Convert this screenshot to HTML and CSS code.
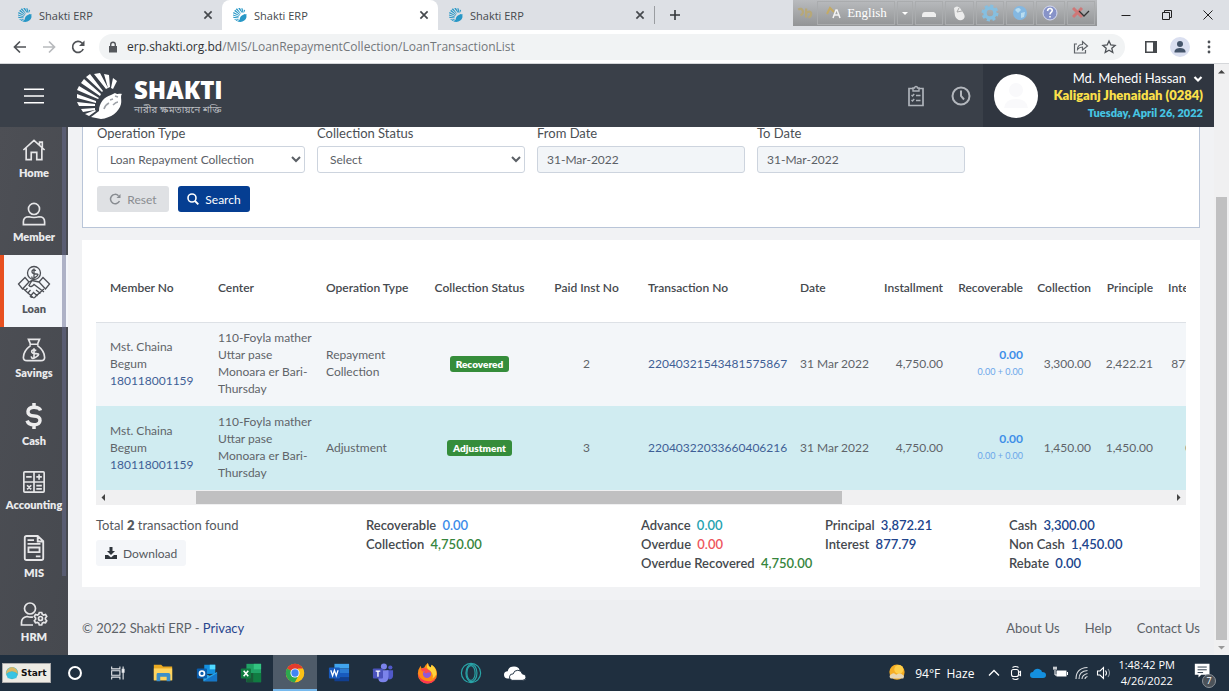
FILE: index.html
```html
<!DOCTYPE html>
<html lang="en">
<head>
<meta charset="utf-8">
<meta name="viewport" content="width=device-width, initial-scale=1">
<title>Shakti ERP</title>
<link rel="stylesheet" href="styles.css">
</head>
<body>
<svg class="defs" aria-hidden="true">
  <symbol id="logo" viewBox="0 0 46 46">
    <path d="M36 5l4 3-4 8-2-1zM27 1l5 1 1 12-2 1zM17 1l6-1 8 15-2 1zM9 4l4-3 13 17-1 1zM4 10l3-4 17 15-1 2zM0 17l2-4 20 12-1 1zM0 25v-4l19 7v2zM2 33l-2-4 18 2v2zM6 39l-2-3 14-1v2zM12 43l-4-2 10-4 1 1z"/>
    <path d="M14 44l8-6c0-8 5-14 12-16l4-2c3 2 4 0 7 1-2 2 0 6-1 10-2 8-10 14-20 15z"/>
  </symbol>
  <symbol id="close" viewBox="0 0 10 10"><path d="M2 2l6 6M8 2L2 8" fill="none" stroke="currentColor" stroke-width="1.400"/></symbol>
</svg>
<div class="window">
  <div class="tabstrip">
    <div class="tab"><svg class="favicon"><use href="#logo"/></svg><span>Shakti ERP</span><button aria-label="Close tab"><svg><use href="#close"/></svg></button></div>
    <div class="tab active"><svg class="favicon"><use href="#logo"/></svg><span>Shakti ERP</span><button aria-label="Close tab"><svg><use href="#close"/></svg></button></div>
    <div class="tab"><svg class="favicon"><use href="#logo"/></svg><span>Shakti ERP</span><button aria-label="Close tab"><svg><use href="#close"/></svg></button></div>
    <button class="newtab" aria-label="New tab"><svg viewBox="0 0 12 12"><path d="M6 1v10M1 6h10" stroke="#33363a" stroke-width="1.600"/></svg></button>
    <div class="langbar">
      <span class="lang-mark"><svg viewBox="0 0 16 16" fill="none" stroke="#b7a878" stroke-width="2"><path d="M2 5c4-3 6 4 2 5M9 4v8M9 8c5-4 6 3 2 4"/></svg></span>
      <button class="lang-name"><svg viewBox="0 0 18 16"><path d="M2 9l3-6 4 4" fill="none" stroke="#c4aa64" stroke-width="2"/><path d="M8 13l3-8h1l3 8M9 10h5" fill="none" stroke="#f4f4f4" stroke-width="1.500"/></svg>English</button>
      <button class="lang-drop" aria-label="Languages"><svg viewBox="0 0 8 8"><path d="M1 3h6L4 6z" fill="#fff"/></svg></button>
      <button aria-label="Keyboard"><svg viewBox="0 0 18 18"><path d="M2 12q0-4 3-4h9l2 2v3H2z" fill="#eee"/></svg></button>
      <button aria-label="Mouse"><svg viewBox="0 0 18 18"><path d="M4 4q3-3 6 0l4 6q2 4-2 6-5 1-7-4z" fill="#ececec"/><path d="M9 4l-2 4 5-1" fill="none" stroke="#aaa"/></svg></button>
      <button aria-label="Settings"><svg viewBox="0 0 18 18"><circle cx="9" cy="9" r="5" fill="none" stroke="#86bfe0" stroke-width="3.500"/><circle cx="9" cy="9" r="7" fill="none" stroke="#86bfe0" stroke-width="3" stroke-dasharray="3 2.500"/></svg></button>
      <button aria-label="Web"><svg viewBox="0 0 18 18"><circle cx="9" cy="9" r="7" fill="#84b8e2"/><path d="M4 6q4-4 6 0l-3 3zM10 9l4-1-1 5-3 1z" fill="#b8dcf0"/></svg></button>
      <button aria-label="Help"><svg viewBox="0 0 18 18"><circle cx="9" cy="9" r="7" fill="#8793c8" stroke="#d5daf0"/><path d="M6.500 7q.5-3 3-2.500 3 1 1 3.500-1.500 1-1.500 2.500M9 12v1.500" fill="none" stroke="#fff" stroke-width="1.600"/></svg></button>
      <button aria-label="Exit"><svg viewBox="0 0 18 18"><path d="M1 4l9 9M10 4l-9 9" stroke="#cf7777" stroke-width="3"/><path d="M7 7l5 5 5-5" fill="none" stroke="#333" stroke-width="1.300"/></svg></button>
    </div>
    <div class="caption">
      <button aria-label="Minimize"><svg viewBox="0 0 12 12"><path d="M1.500 6.500h9" stroke="#222"/></svg></button>
      <button aria-label="Restore"><svg viewBox="0 0 12 12"><path d="M1.500 3.500h7v7h-7zM3.500 3.500v-2h7v7h-2" fill="none" stroke="#222"/></svg></button>
      <button aria-label="Close"><svg viewBox="0 0 12 12"><path d="M1.500 1.500l9 9M10.500 1.500l-9 9" stroke="#222"/></svg></button>
    </div>
  </div>
  <div class="toolbar">
    <button aria-label="Back"><svg viewBox="0 0 16 16"><path d="M14 8H3M8 2.500L2.500 8 8 13.500" fill="none" stroke="#505357" stroke-width="1.700"/></svg></button>
    <button aria-label="Forward"><svg viewBox="0 0 16 16"><path d="M2 8h11M8 2.500L13.500 8 8 13.500" fill="none" stroke="#b8babd" stroke-width="1.700"/></svg></button>
    <button aria-label="Reload"><svg viewBox="0 0 16 16"><path d="M13.200 10A5.500 5.500 0 1 1 12 4l1.500 1.500" fill="none" stroke="#505357" stroke-width="1.700"/><path d="M14.500 1.500v5.500H9z" fill="#505357"/></svg></button>
    <div class="address">
      <svg viewBox="0 0 12 12"><path d="M2 5h8v6.500H2z" fill="#55585c"/><path d="M3.700 5V3.500a2.300 2.300 0 0 1 4.600 0V5" fill="none" stroke="#55585c" stroke-width="1.400"/></svg>
      <span class="url"><span>erp.shakti.org.bd</span>/MIS/LoanRepaymentCollection/LoanTransactionList</span>
      <button aria-label="Share"><svg viewBox="0 0 16 16" fill="none" stroke="#5f6368" stroke-width="1.200"><path d="M4 5H1.500v9h11V11M4.500 10.500q0-5 5-5V2.500l5 4.500-5 4V8q-3 0-5 2.500z"/></svg></button>
      <button aria-label="Bookmark"><svg viewBox="0 0 16 16" fill="none" stroke="#4d5156" stroke-width="1.300"><path d="M8 2l1.800 4 4.300.4-3.300 2.900 1 4.200L8 11.300l-3.800 2.200 1-4.200L1.900 6.400 6.200 6z"/></svg></button>
    </div>
    <button aria-label="Side panel"><svg viewBox="0 0 16 16"><path d="M2.800 2.800h10.400v10.400H2.800z" fill="none" stroke="#45484c" stroke-width="1.600"/><path d="M10 2h4v12h-4z" fill="#45484c"/></svg></button>
    <button class="profile" aria-label="Profile"><svg viewBox="0 0 16 16" fill="#44546a"><circle cx="8" cy="5" r="3"/><path d="M2.500 13.500V12q1-3 5.500-3t5.500 3v1.500z"/></svg></button>
    <button aria-label="Menu"><svg viewBox="0 0 16 16" fill="#4d5156"><circle cx="8" cy="3" r="1.400"/><circle cx="8" cy="8" r="1.400"/><circle cx="8" cy="13" r="1.400"/></svg></button>
  </div>

  <div class="viewport">
    <div class="app">
      <header class="header">
        <button class="burger" aria-label="Toggle menu"><svg viewBox="0 0 20 16"><path d="M0 1.200h20M0 8h20M0 14.800h20" stroke="#fff" stroke-width="1.500"/></svg></button>
        <a class="brand" href="#">
          <svg class="brand-mark" viewBox="0 0 46 46"><use href="#logo"/><path d="M27 36q1-4 5-6M33 27l3-1M36 32q3-3 5-3M38 23l3 1" fill="none" stroke="#9ea2a8" stroke-width="1.500"/></svg>
          <span class="brand-text"><strong>SHAKTI</strong><small>নারীর ক্ষমতায়নে শক্তি</small></span>
        </a>
        <nav class="header-tools">
          <button aria-label="Tasks"><svg viewBox="0 0 20 22" fill="none" stroke="#aeb3ba" stroke-width="1.700"><path d="M7 3.500H3v17h14v-17h-4"/><path d="M7 6V3h1.500a1.500 1.500 0 0 1 3 0H13v3zM5.500 10l1 1 1.700-2M5.500 15l1 1 1.700-2M10 10.500h4.500M10 15.500h4.500" stroke-width="1.400"/></svg></button>
          <button aria-label="History"><svg viewBox="0 0 20 20" fill="none" stroke="#b3b7bd" stroke-width="2"><circle cx="10" cy="10" r="8.500"/><path d="M10 4.500V10l3 3.500"/></svg></button>
        </nav>
        <div class="user">
          <svg class="avatar" viewBox="0 0 44 44"><circle cx="22" cy="22" r="22" fill="#fff"/><g fill="#f9f9fb"><circle cx="22" cy="16" r="7"/><path d="M10 34q1-9 12-9t12 9z"/></g></svg>
          <div class="user-text">
            <button class="user-name">Md. Mehedi Hassan <svg viewBox="0 0 10 10"><path d="M1.500 3L5 6.500 8.500 3" fill="none" stroke="#fff" stroke-width="2.200"/></svg></button>
            <span class="branch">Kaliganj Jhenaidah (0284)</span>
            <span class="today">Tuesday, April 26, 2022</span>
          </div>
        </div>
      </header>
      <div class="body">
        <nav class="sidebar">
          <a href="#"><svg viewBox="0 0 26 26" fill="none" stroke="#e6e6e8" stroke-width="1.800"><path d="M1.500 13L13 2.500 24.500 13M19 7.500V4.500h3v6M4.500 11v12.500h5.500v-8h6v8h5.500V11"/></svg>Home</a>
          <a href="#"><svg viewBox="0 0 26 26" fill="none" stroke="#e6e6e8" stroke-width="1.800"><circle cx="13" cy="7.500" r="6"/><path d="M1.500 24.500v-3q0-5.500 6-5.500 5.500 1.500 11 0 6 0 6 5.500v3z"/></svg>Member</a>
          <a href="#" class="current" aria-current="page"><svg class="tallest" viewBox="0 0 34 34" fill="none" stroke="#4c4f55" stroke-width="1.300"><circle cx="17" cy="8" r="6.500"/><path d="M19 5.500q-4-1.500-4 1t4 2.500-.2 3-4-.5M17 3.500v9M1.500 19L8 12.500l4 4.500-6.500 7zM32.500 19L26 12.500 22 17l6.500 7zM12 17l3-1.500 7 1.500M12 17l-6 6.500 10 9q1.500 1 2.500-1l8.500-7.500M15 15.500l-3 5q2 2.500 5-1l10 7.500M16 32q-2 1-3-1M10.500 23l-2.500 3M13.500 25l-3 3.500M16.500 27.500L13.500 31M19 25l4.500 3.500M16 27l4.500 4"/></svg>Loan</a>
          <a href="#"><svg viewBox="0 0 26 26" fill="none" stroke="#e6e6e8" stroke-width="1.800"><path d="M9 6L7 1.500h12L17 6M8 6.800h10M9.500 8Q1.500 14 1.500 21q0 3.500 4 3.500h15q4 0 4-3.500 0-7-8-13M15.500 13.500q-5-1.500-5 1t5 2.500 0 3.500-5.500-.5M13 11v11.500"/></svg>Savings</a>
          <a href="#"><svg class="tall" viewBox="0 0 26 30" fill="none" stroke="#ededee" stroke-width="3.800"><path d="M20 9Q19 5.500 13 5.500T6.500 10t6.500 5 6.500 5-6.500 4.500T5.500 20M13 1v5M13 24v5"/></svg>Cash</a>
          <a href="#"><svg viewBox="0 0 26 26" fill="none" stroke="#e6e6e8" stroke-width="1.800"><rect x="2" y="2" width="22" height="22" rx="1"/><path d="M13 2v22M2 13h22M4.500 7.500h6M15.500 7.500h6M18.500 4.500v6M5.500 16.500l4.500 4.500M10 16.500L5.500 21M15.500 17h6M15.500 20.500h6"/></svg>Accounting</a>
          <a href="#"><svg class="tall" viewBox="0 0 26 30" fill="none" stroke="#e6e6e8" stroke-width="2"><path d="M5 2h12l6 5.500V26q0 2-2 2H5q-2 0-2-2V4q0-2 2-2zM17 2v6h6M6 6.500h7M6 10.500h14M7 14.500h12v5H7zM15 24h5"/></svg>MIS</a>
          <a href="#"><svg class="wide" viewBox="0 0 28 26" fill="none" stroke="#e6e6e8" stroke-width="1.700"><circle cx="10" cy="7.500" r="5.500"/><path d="M13 24H1.500v-2.500q0-5 5.500-6 3 1 6 .5"/><circle cx="20.500" cy="17.500" r="2"/><path d="M19.300 11.500h2.400l.6 1.800 1.300.7 1.900-.5 1.200 2-1.300 1.500v1.300l1.300 1.500-1.200 2-1.900-.4-1.300.7-.6 1.900h-2.400l-.6-1.900-1.300-.7-1.900.4-1.200-2 1.300-1.500V17l-1.300-1.500 1.200-2 1.900.5 1.300-.7z"/></svg>HRM</a>
          <span class="sidebar-thumb"></span>
        </nav>
        <div class="page">
          <main class="content">
            <form class="card filters">
              <div class="fields">
                <div class="field"><label for="op">Operation Type</label><select id="op"><option>Loan Repayment Collection</option></select></div>
                <div class="field"><label for="status">Collection Status</label><select id="status"><option>Select</option></select></div>
                <div class="field"><label for="from">From Date</label><input id="from" type="text" value="31-Mar-2022" readonly></div>
                <div class="field"><label for="to">To Date</label><input id="to" type="text" value="31-Mar-2022" readonly></div>
              </div>
              <div class="actions">
                <button type="reset" class="btn reset"><svg viewBox="0 0 12 12"><path d="M10.500 8A4.700 4.700 0 1 1 9.500 2.700" fill="none" stroke="#888c91" stroke-width="1.500"/><path d="M11.500 1v4h-4z" fill="#888c91"/></svg>Reset</button>
                <button type="button" class="btn search"><svg viewBox="0 0 12 12"><path d="M8 8l3.300 3.300" stroke="#fff" stroke-width="1.900"/><circle cx="5" cy="5" r="4" fill="none" stroke="#fff" stroke-width="1.600"/></svg>Search</button>
              </div>
            </form>
            <section class="card results">
              <div class="table-wrap">
                <table>
                  <colgroup><col class="c-member"><col class="c-name"><col class="c-name"><col class="c-status"><col class="c-inst"><col class="c-trx"><col class="c-date"><col class="c-installment"><col class="c-recoverable"><col class="c-collection"><col class="c-principle"><col class="c-interest"></colgroup>
                  <thead><tr><th>Member No</th><th>Center</th><th>Operation Type</th><th class="mid">Collection Status</th><th class="mid">Paid Inst No</th><th>Transaction No</th><th>Date</th><th class="num">Installment</th><th class="num">Recoverable</th><th class="num">Collection</th><th class="num">Principle</th><th class="num">Interest</th></tr></thead>
                  <tbody>
                    <tr><td>Mst. Chaina Begum <a href="#">180118001159</a></td><td>110-Foyla mather Uttar pase Monoara er Bari-Thursday</td><td>Repayment Collection</td><td class="mid"><span class="badge">Recovered</span></td><td class="mid">2</td><td><a href="#">22040321543481575867</a></td><td class="date">31 Mar 2022</td><td class="num">4,750.00</td><td class="num due"><b>0.00</b><small>0.00 + 0.00</small></td><td class="num">3,300.00</td><td class="num">2,422.21</td><td class="num">877.79</td></tr>
                    <tr class="adjust"><td>Mst. Chaina Begum <a href="#">180118001159</a></td><td>110-Foyla mather Uttar pase Monoara er Bari-Thursday</td><td>Adjustment</td><td class="mid"><span class="badge">Adjustment</span></td><td class="mid">3</td><td><a href="#">22040322033660406216</a></td><td class="date">31 Mar 2022</td><td class="num">4,750.00</td><td class="num due"><b>0.00</b><small>0.00 + 0.00</small></td><td class="num">1,450.00</td><td class="num">1,450.00</td><td class="num">0.00</td></tr>
                  </tbody>
                </table>
              </div>
              <div class="hscroll"><svg viewBox="0 0 15 15"><path d="M9 4v7L5.500 7.500z" fill="#444"/></svg><span class="htrack"><span class="hthumb"></span></span><svg viewBox="0 0 15 15"><path d="M6 4v7l3.500-3.500z" fill="#444"/></svg></div>
              <div class="summary">
                <div><p class="found">Total <b>2</b> transaction found</p><button class="btn download"><svg viewBox="0 0 12 12" fill="#2f353c"><path d="M4.500 0h3v4H10L6 8 2 4h2.500zM0 8h3l3 2.500L9 8h3v4H0z"/></svg>Download</button></div>
                <div><p>Recoverable <b class="blue">0.00</b></p><p>Collection <b class="green">4,750.00</b></p></div>
                <div><p>Advance <b class="teal">0.00</b></p><p>Overdue <b class="red">0.00</b></p><p>Overdue Recovered <b class="green">4,750.00</b></p></div>
                <div><p>Principal <b class="navy">3,872.21</b></p><p>Interest <b class="navy">877.79</b></p></div>
                <div><p>Cash <b class="navy">3,300.00</b></p><p>Non Cash <b class="navy">1,450.00</b></p><p>Rebate <b class="navy">0.00</b></p></div>
              </div>
            </section>
          </main>
          <footer class="footer"><span>© 2022 Shakti ERP - <a class="privacy" href="#">Privacy</a></span><nav><a href="#">About Us</a><a href="#">Help</a><a href="#">Contact Us</a></nav></footer>
        </div>
      </div>
    </div>
    <div class="vscroll"><svg viewBox="0 0 15 15"><path d="M4 9.500h7L7.500 6z" fill="#444"/></svg><span class="vtrack"><span class="vthumb"></span></span><svg viewBox="0 0 15 15"><path d="M4 6h7L7.500 9.500z" fill="#999"/></svg></div>
  </div>

  <div class="taskbar">
    <button class="start"><svg viewBox="0 0 16 16"><circle cx="8" cy="8" r="7" fill="#45b9c9"/><path d="M1 9q1-7 7-8 6 1 7 8-7-6-14 0z" fill="#d9b765"/><path d="M3 9q5-5 10 0v5H3z" fill="#37c4e4"/></svg>Start</button>
    <div class="apps">
      <button aria-label="Cortana"><svg viewBox="0 0 24 24"><circle cx="12" cy="12" r="6.500" fill="none" stroke="#fff" stroke-width="2.200"/></svg></button>
      <button aria-label="Task view"><svg viewBox="0 0 24 24" fill="none" stroke="#e5e8eb" stroke-width="1.200"><path d="M4 5v2.500h9V5M4 19v-2.500h9V19M4 9.500h9v5H4zM16.500 5v14"/><path d="M15.500 8h2v3h-2z" fill="#fff"/></svg></button>
      <button aria-label="File Explorer"><svg viewBox="0 0 24 24"><path d="M2 3h8l2 2h10v15H2z" fill="#e9a922"/><path d="M2 7h20v13H2z" fill="#ffd45e"/><path d="M6 12h12q2 0 2 2v7h-4v-5H9v5H5v-7q0-2 1-2z" fill="#3d8fc8"/></svg></button>
      <button aria-label="Outlook"><svg viewBox="0 0 24 24"><path d="M9 3h12v10H9z" fill="#1490df"/><path d="M15 3h6v5h-6z" fill="#50d9ff"/><path d="M8 12l7 3 8-4v10H8z" fill="#28a8ea"/><path d="M8 21l15-9v9z" fill="#1676c8"/><rect x="1" y="7" width="11" height="11" rx="1" fill="#0a5dac"/><circle cx="6.500" cy="12.500" r="2.700" fill="none" stroke="#fff" stroke-width="1.800"/></svg></button>
      <button aria-label="Excel"><svg viewBox="0 0 24 24"><path d="M7 2h16v20H7z" fill="#21a366"/><path d="M15 2h8v6h-8z" fill="#33c481"/><path d="M7 12h8v10H7z" fill="#185c37"/><path d="M15 12h8v10h-8z" fill="#107c41"/><rect x="1" y="7" width="11" height="11" rx="1" fill="#107c41"/><path d="M4 9.500l5 6M9 9.500l-5 6" stroke="#fff" stroke-width="1.700"/></svg></button>
      <button class="running" aria-label="Chrome"><svg viewBox="0 0 24 24"><circle cx="12" cy="12" r="10" fill="#fbc116"/><path d="M12 12L3.340 7A10 10 0 0 1 20.660 7z" fill="#e33b2e"/><path d="M3.340 7A10 10 0 0 0 12 22l4.500-8L12 12z" fill="#2da94f"/><path d="M20.660 7A10 10 0 0 1 12 22l4.500-8L15 7z" fill="#fbc116"/><circle cx="12" cy="12" r="5" fill="#fff"/><circle cx="12" cy="12" r="4" fill="#4285f4"/></svg></button>
      <button aria-label="Word"><svg viewBox="0 0 24 24"><path d="M7 2h16v5H7z" fill="#41a5ee"/><path d="M7 7h16v5H7z" fill="#2b7cd3"/><path d="M7 12h16v5H7z" fill="#185abd"/><path d="M7 17h16v4H7z" fill="#103f91"/><rect x="1" y="6" width="12" height="12" rx="1" fill="#185abd"/><path d="M3 9l2 6 2-6 2 6 2-6" fill="none" stroke="#fff" stroke-width="1.400"/></svg></button>
      <button aria-label="Teams"><svg viewBox="0 0 24 24"><circle cx="13" cy="5" r="3.300" fill="#7b83eb"/><circle cx="20" cy="6" r="2.300" fill="#5059c9"/><path d="M16 9h7v6q0 4-5 4z" fill="#5059c9"/><path d="M7 9h11v7q0 6-6 6t-5-6z" fill="#7b83eb"/><rect x="1" y="7" width="11" height="11" rx="1" fill="#4b53bc"/><path d="M4 10h5M6.500 10v6" stroke="#fff" stroke-width="1.500"/></svg></button>
      <button aria-label="Firefox"><svg viewBox="0 0 24 24"><path d="M13 1q0 3 3 5 2-1 1-3 6 4 6 10a10.500 10.500 0 0 1-21 0Q2 8 5 4l1 3 3-1q1-3 4-5z" fill="#ff8a16"/><path d="M13 1q0 3 3 5l1-3q6 4 5 11-2 3-4 4 2-6-5-10-2-3 0-7z" fill="#ffd43b"/><path d="M2 12q3 10 14 9 4-1 6-5-2 7-9.500 7.500Q3 23 2 12z" fill="#ff3750"/><circle cx="12" cy="13" r="4.500" fill="#9059d8"/><path d="M6 9q4-2 7 1-2 0-3 2" fill="none" stroke="#ff4b4b" stroke-width="3"/></svg></button>
      <button aria-label="Opera"><svg viewBox="0 0 24 24" fill="none" stroke="#29a5a8" stroke-width="1.300"><circle cx="12" cy="12" r="10.500"/><ellipse cx="12.500" cy="12" rx="6" ry="9.500"/><ellipse cx="12" cy="12" rx="4.500" ry="8"/></svg></button>
      <button aria-label="OneDrive"><svg viewBox="0 0 24 24" fill="#fff"><path d="M4 18a4 4 0 0 1 0-8q1-5 7-5 5 0 6 4-6 0-7 4-4 0-4 5z"/><path d="M9 20a3.500 3.500 0 0 1 1-7q1-4 5-4 4 0 5 4 4 0 4 3.500T20 20z" stroke="#1f2f3f"/></svg></button>
    </div>
    <div class="tray">
      <button class="weather"><svg viewBox="0 0 20 20"><circle cx="10" cy="9" r="8.500" fill="#f5ad24"/><circle cx="12" cy="6" r="5" fill="#ffcf49"/><path d="M3 16q-3-3 1-5 3-2 5 1 5-3 7 0 3 1 1 4z" fill="#e7d6b4"/></svg>94°F&nbsp; Haze</button>
      <button aria-label="Hidden icons"><svg viewBox="0 0 16 16"><path d="M3 10.500l5-5 5 5" fill="none" stroke="#fff" stroke-width="1.300"/></svg></button>
      <button aria-label="Meet now"><svg viewBox="0 0 16 16" fill="none" stroke="#fff" stroke-width="1.100"><rect x="3.500" y="4.500" width="7" height="7" rx="2"/><path d="M10.500 7.500l2-1v4l-2-1M4.500 2.500q3-2 6 0M4.500 13.500q3 2 6 0"/></svg></button>
      <button aria-label="OneDrive sync"><svg viewBox="0 0 16 16" fill="#1490df"><path d="M3 13a3 3 0 0 1 0-6q2-4 6-3 3 1 3 3 4 0 4 3t-3 3z"/></svg></button>
      <button aria-label="Battery"><svg viewBox="0 0 16 16"><path d="M4.500 5.500h10v6h-10z" fill="#fff"/><path d="M1 3h4M2 1.500V5M4 1.500V5M3 5v5h3M15.500 7v3" fill="none" stroke="#fff"/></svg></button>
      <button aria-label="Network"><svg viewBox="0 0 16 16" fill="none" stroke="#d9dde1" stroke-width="1.100"><path d="M2 14Q2 3 13.500 2.500M5 14q0-8 8.500-8.500M8 14q0-4 5.500-5.500M11 14q0-2 2.500-2.500"/></svg></button>
      <button aria-label="Volume"><svg viewBox="0 0 16 16" fill="none" stroke="#fff" stroke-width="1.100"><path d="M1.500 6h2.500l3.500-3.500v11L4 10H1.500zM9.500 5.500q2 2.500 0 5"/><path d="M12 4q3 4 0 8" stroke="#8b96a0"/></svg></button>
      <button class="clock"><span>1:48:42 PM</span><span>4/26/2022</span></button>
      <button class="notice" aria-label="Notifications"><svg viewBox="0 0 24 24"><path d="M2 2h16v12h-9l-3 3v-3H2z" fill="#fff"/><path d="M5 5.500h10M5 8.500h10M5 11.500h6" stroke="#1f2f3f"/></svg><span class="count">7</span></button>
    </div>
  </div>
</div>
</body>
</html>
```
FILE: styles.css
```css
* { box-sizing: border-box; }
body { margin: 0; font-family: Lato, "Open Sans", sans-serif; font-size: 12px; color: #55595e; }
button { border: 0; background: none; padding: 0; margin: 0; font: inherit; color: inherit; }
a { text-decoration: none; color: inherit; }
p { margin: 0; }
svg { display: block; flex: none; }
.defs { position: absolute; width: 0; height: 0; }
.window { display: flex; flex-direction: column; height: 100vh; overflow: hidden; }

.tabstrip { display: flex; align-items: stretch; height: 30px; background: #dde0e5; font: 11px "Noto Sans", sans-serif; color: #45494d; flex: none; }
.tab { display: flex; align-items: center; flex: 0 1 216px; gap: 6px; padding: 0 8px 0 10px; }
.tab:first-child { flex-basis: 222px; padding-left: 17px; }
.tab.active { background: #fff; border-radius: 8px 8px 0 0; }
.tab span { flex: 1; font: 11px "Open Sans", sans-serif; }
.favicon { width: 16px; height: 14px; fill: #2797c6; }
.tab button svg { width: 12px; height: 12px; }
.newtab { display: flex; align-items: center; align-self: center; padding-left: 14px; height: 18px; border-left: 1px solid #9a9da1; }
.newtab svg { width: 12px; height: 12px; }
.langbar { display: flex; align-items: center; gap: 2px; height: 26px; width: 304px; margin-left: auto; padding: 0 2px; background: linear-gradient(#b9bbbe, #929496); }
.langbar button, .lang-mark { display: flex; align-items: center; justify-content: center; flex: 1; height: 24px; border: 1px solid #aaacae; }
.langbar .lang-mark { flex: 0 0 20px; border: 0; }
.langbar svg { width: 18px; height: 18px; }
.langbar .lang-name { flex: 0 0 78px; gap: 4px; color: #fff; font: 13px "Liberation Serif", serif; }
.langbar .lang-drop { flex: 0 0 16px; }
.langbar .lang-drop svg { width: 8px; height: 8px; }
.caption { display: flex; align-items: center; width: 132px; padding-left: 8px; }
.caption button { flex: 1; display: flex; justify-content: center; }
.caption svg { width: 12px; height: 12px; }

.toolbar { display: flex; align-items: center; gap: 13px; height: 34px; padding: 0 12px; background: #fff; border-bottom: 1px solid #d5d7da; flex: none; }
.toolbar svg { width: 16px; height: 16px; }
.toolbar > button:last-child { width: 16px; }
.address { display: flex; align-items: center; flex: 1; gap: 12px; height: 26px; padding: 0 8px; margin-right: 5px; border-radius: 13px; background: #f1f3f4; }
.profile { margin: 0 -2px 0 -2px; }
.address > svg { width: 12px; height: 12px; }
.url { flex: 1; margin-left: -4px; font: 12px "Open Sans", sans-serif; color: #73777b; }
.url span { color: #2f3236; }
.profile { padding: 2px; border-radius: 50%; background: #dadff0; }

.viewport { display: flex; flex: 1; min-height: 0; }
.app { display: flex; flex-direction: column; flex: 1; min-width: 0; }
.header { display: flex; align-items: center; height: 63px; background: #3a4049; flex: none; }
.burger { padding: 0 24px; }
.burger svg { width: 20px; height: 16px; }
.brand { display: flex; align-items: center; gap: 11px; margin-left: 9px; color: #fff; }
.brand-mark { width: 46px; height: 46px; fill: #fff; }
.brand-text { display: flex; flex-direction: column; padding-top: 4px; }
.brand-text strong { font: 800 24px/26px "Open Sans", sans-serif; }
.brand-text small { font: 10px/16px "Noto Sans Bengali", "Noto Sans", sans-serif; color: #b9bcc0; }
.header-tools { display: flex; gap: 25px; margin-left: auto; padding-right: 12px; }
.header-tools svg { width: 20px; height: 22px; }
.user { display: flex; align-items: center; justify-content: space-between; width: 231px; height: 100%; padding: 0 11px; background: #303640; }
.avatar { width: 44px; height: 44px; }
.user-text { display: flex; flex-direction: column; align-items: flex-end; line-height: 17px; }
.user-name { display: flex; align-items: center; gap: 7px; font-size: 13px; color: #fff; }
.user-name svg { width: 10px; height: 10px; }
.branch { font-size: 13px; font-weight: 800; color: #fbe04a; }
.today { font-size: 11px; font-weight: 800; color: #46c5e3; }

.body { display: flex; flex: 1; min-height: 0; }
.sidebar { position: relative; width: 68px; background: linear-gradient(100deg, #4d4f55, #46494f); flex: none; overflow: hidden; }
.sidebar a { display: flex; flex-direction: column; align-items: center; gap: 2px; padding: 10px 0; line-height: 16px; font-size: 11px; font-weight: 800; color: #e9eaec; }
.sidebar svg { width: 24px; height: 26px; }
.sidebar .tall { height: 30px; }
.sidebar .tallest { width: 34px; height: 34px; }
.sidebar .wide { width: 28px; }
.sidebar .current { background: #f3f6fa; box-shadow: inset 4px 0 #e8501f; color: #54585e; }
.sidebar-thumb { position: absolute; top: 0; right: 2px; width: 4px; height: 85%; background: rgba(105, 110, 145, .5); }

.page { display: flex; flex-direction: column; justify-content: space-between; flex: 1; min-width: 0; background: #f1f2f4; }
.content { display: flex; flex-direction: column; gap: 12px; padding: 0 14px; }
.card { background: #fff; }
.filters { padding: 0 14px 15px; border: 1px solid #b9c5d8; border-top: 0; }
.fields { display: grid; grid-template-columns: repeat(5, 1fr); gap: 12px; }
.field { display: flex; flex-direction: column; gap: 6px; }
.field label { font-size: 13px; line-height: 13px; color: #4b4f54; }
.field select, .field input { width: 100%; height: 27px; border: 1px solid #cdd4de; border-radius: 3px; background: #fff; font: 12px Lato, sans-serif; color: #5b6066; }
.field select { padding: 0 8px; }
.field input { padding: 0 9px; background: #f2f5f8; }
.actions { display: flex; gap: 9px; margin-top: 13px; }
.btn { display: flex; align-items: center; justify-content: center; gap: 6px; height: 26px; padding: 0 9px; border-radius: 3px; }
.btn svg { width: 12px; height: 12px; }
.reset { width: 72px; background: #dfe1e4; color: #8a8d91; }
.search { width: 72px; background: #053e92; color: #fff; }

.results { padding: 14px; }
.table-wrap { overflow: hidden; }
table { width: 1120px; table-layout: fixed; border-collapse: collapse; }
.c-member { width: 115px; }
.c-name { width: 108px; }
.c-status { width: 105px; }
.c-inst { width: 109px; }
.c-trx { width: 152px; }
.c-date { width: 82px; }
.c-installment { width: 75px; }
.c-recoverable { width: 80px; }
.c-collection { width: 68px; }
.c-principle { width: 62px; }
.c-interest { width: 56px; }
th, td { padding: 0 7px; text-align: left; }
th { height: 68px; white-space: nowrap; font-weight: 600; color: #45494e; border-bottom: 1px solid #dde1e6; }
td { height: 84px; padding-bottom: 2px; line-height: 17px; background: #f3f6f9; color: #5f6469; }
.adjust td { background: #d0ecf1; }
th:first-child, td:first-child { padding-left: 14px; }
td a { color: #3f5f96; }
td:first-child a { display: block; }
.mid { text-align: center; }
.num { text-align: right; }
.date { white-space: nowrap; }
td:nth-child(2), td.date { padding-right: 0; }
.badge { display: inline-block; padding: 0 6px; border-radius: 3px; background: #358d3b; color: #fff; font-size: 10px; line-height: 16px; font-weight: 800; }
.due b { display: block; color: #3f8fe8; }
.due small { display: block; font-size: 9px; color: #6ba6ea; }
.hscroll, .vscroll { display: flex; background: #f0f0f1; }
.hscroll { height: 15px; }
.hscroll svg, .vscroll svg { width: 15px; height: 15px; }
.htrack { display: flex; flex: 1; padding: 1px 0; }
.hthumb { width: 61%; margin-left: 8%; background: #c0c0c1; }
.summary { display: grid; grid-template-columns: 270fr 275fr 184fr 184fr 177fr; padding-top: 11px; font-size: 13px; line-height: 19px; font-weight: 600; color: #45494e; white-space: nowrap; }
.summary b { font-weight: 600; margin-left: 3px; }
.found { font-weight: 400; color: #55595e; }
.summary .found b { font-weight: 800; margin: 0; }
.download { margin-top: 5px; background: #f4f6f9; font-size: 12px; font-weight: 400; color: #55595e; }
.blue { color: #3b8bea; } .green { color: #36853d; } .teal { color: #25a2b0; } .red { color: #ee555d; } .navy { color: #20448c; }
.footer { display: flex; align-items: center; justify-content: space-between; height: 55px; padding: 0 14px; background: #edeef1; font-size: 13px; color: #5d6268; }
.footer nav { display: flex; gap: 25px; }
.privacy { color: #28458e; }
.vscroll { flex-direction: column; width: 15px; flex: none; }
.vtrack { display: flex; flex-direction: column; flex: 1; padding: 0 2px; }
.vthumb { height: 79%; margin-top: auto; background: #c0c0c1; }

.taskbar { display: flex; align-items: center; height: 36px; background: #1f2f3f; color: #fff; font: 12px "Open Sans", sans-serif; flex: none; }
.start { display: flex; align-items: center; gap: 2px; width: 49px; height: 20px; margin: 0 2px; padding: 0 2px; border: 1px solid #aaa; background: #edebe4; color: #111; font: bold 9px "DejaVu Sans", sans-serif; }
.start svg { width: 14px; height: 14px; }
.apps { display: flex; height: 100%; }
.apps button { display: flex; align-items: center; justify-content: center; width: 44px; }
.apps svg { width: 22px; height: 22px; }
.apps .running { background: #4e5b69; box-shadow: inset 0 -2px #76b9ed; }
.tray { display: flex; align-items: center; gap: 6px; height: 100%; margin-left: auto; }
.tray svg { width: 16px; height: 16px; }
.weather { display: flex; align-items: center; gap: 9px; margin-right: 6px; }
.tray .weather svg { width: 18px; height: 18px; }
.clock { display: flex; flex-direction: column; align-items: center; padding: 0 6px 0 0; font-size: 11px; line-height: 16px; }
.notice { position: relative; padding: 0 14px 0 6px; }
.tray .notice svg { width: 22px; height: 22px; }
.count { position: absolute; right: 13px; bottom: -4px; width: 14px; height: 14px; border-radius: 50%; background: #4b5259; border: 1px solid #8b9299; font-size: 9px; line-height: 12px; text-align: center; }
```
